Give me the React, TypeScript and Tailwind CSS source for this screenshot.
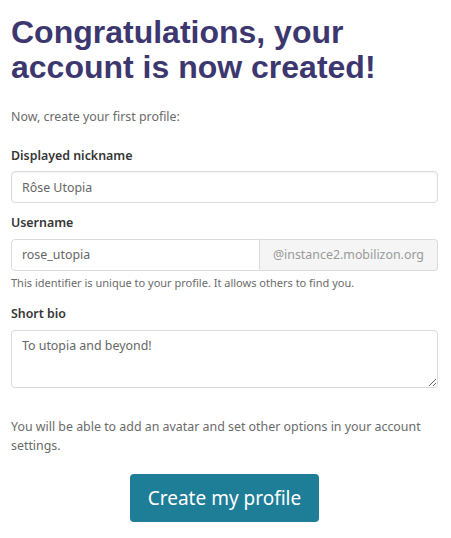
import React from 'react';

const App: React.FC = () => {
  return (
    <div className="min-h-screen bg-white pl-[11px] pr-[13px] pt-[15px] text-[#4a4a4a]" style={{ fontFamily: '"Noto Sans", sans-serif' }}>
      <h1 className="text-[32px] font-bold leading-[35px] text-[#3c376e]" style={{ fontFamily: '"Liberation Sans", Arial, sans-serif' }}>
        Congratulations, your account is now created!
      </h1>
      <p className="mt-[23px] text-[12.4px] text-[#6b6b6b]">Now, create your first profile:</p>

      <form className="mt-[20px]" onSubmit={(e) => e.preventDefault()}>
        <label className="block text-[12.4px] font-semibold text-[#363636]">Displayed nickname</label>
        <input
          defaultValue="Rôse Utopia"
          className="mt-[6px] block h-[32px] w-full rounded border border-[#dbdbdb] px-[10px] text-[12.4px] text-[#666] shadow-[inset_0_1px_2px_rgba(10,10,10,0.05)] outline-none"
        />

        <label className="mt-[11px] block text-[12.4px] font-semibold text-[#363636]">Username</label>
        <div className="mt-[6px] flex h-[32px] w-full">
          <input
            defaultValue="rose_utopia"
            className="h-full min-w-0 flex-1 rounded-l border border-[#dbdbdb] px-[10px] text-[12.4px] text-[#666] outline-none"
          />
          <span className="flex h-full items-center rounded-r border border-l-0 border-[#dbdbdb] bg-[#f5f5f5] px-[13px] text-[12.4px] text-[#9a9a9a]">
            @instance2.mobilizon.org
          </span>
        </div>
        <p className="mt-[4px] text-[11px] text-[#6b6b6b]">This identifier is unique to your profile. It allows others to find you.</p>

        <label className="mt-[14px] block text-[12.4px] font-semibold text-[#363636]">Short bio</label>
        <textarea
          defaultValue="To utopia and beyond!"
          className="mt-[6px] block h-[58px] w-full rounded border border-[#dbdbdb] px-[10px] py-[6px] text-[12.4px] text-[#666] outline-none"
        />

        <p className="mt-[29px] text-[12.4px] leading-[19px] text-[#6b6b6b]">
          You will be able to add an avatar and set other options in your account settings.
        </p>

        <div className="mt-[19px] flex justify-center">
          <button type="submit" className="h-[48px] w-[189px] rounded bg-[#1e7d97] text-[19px] text-white">
            Create my profile
          </button>
        </div>
      </form>
    </div>
  );
};

export default App;
